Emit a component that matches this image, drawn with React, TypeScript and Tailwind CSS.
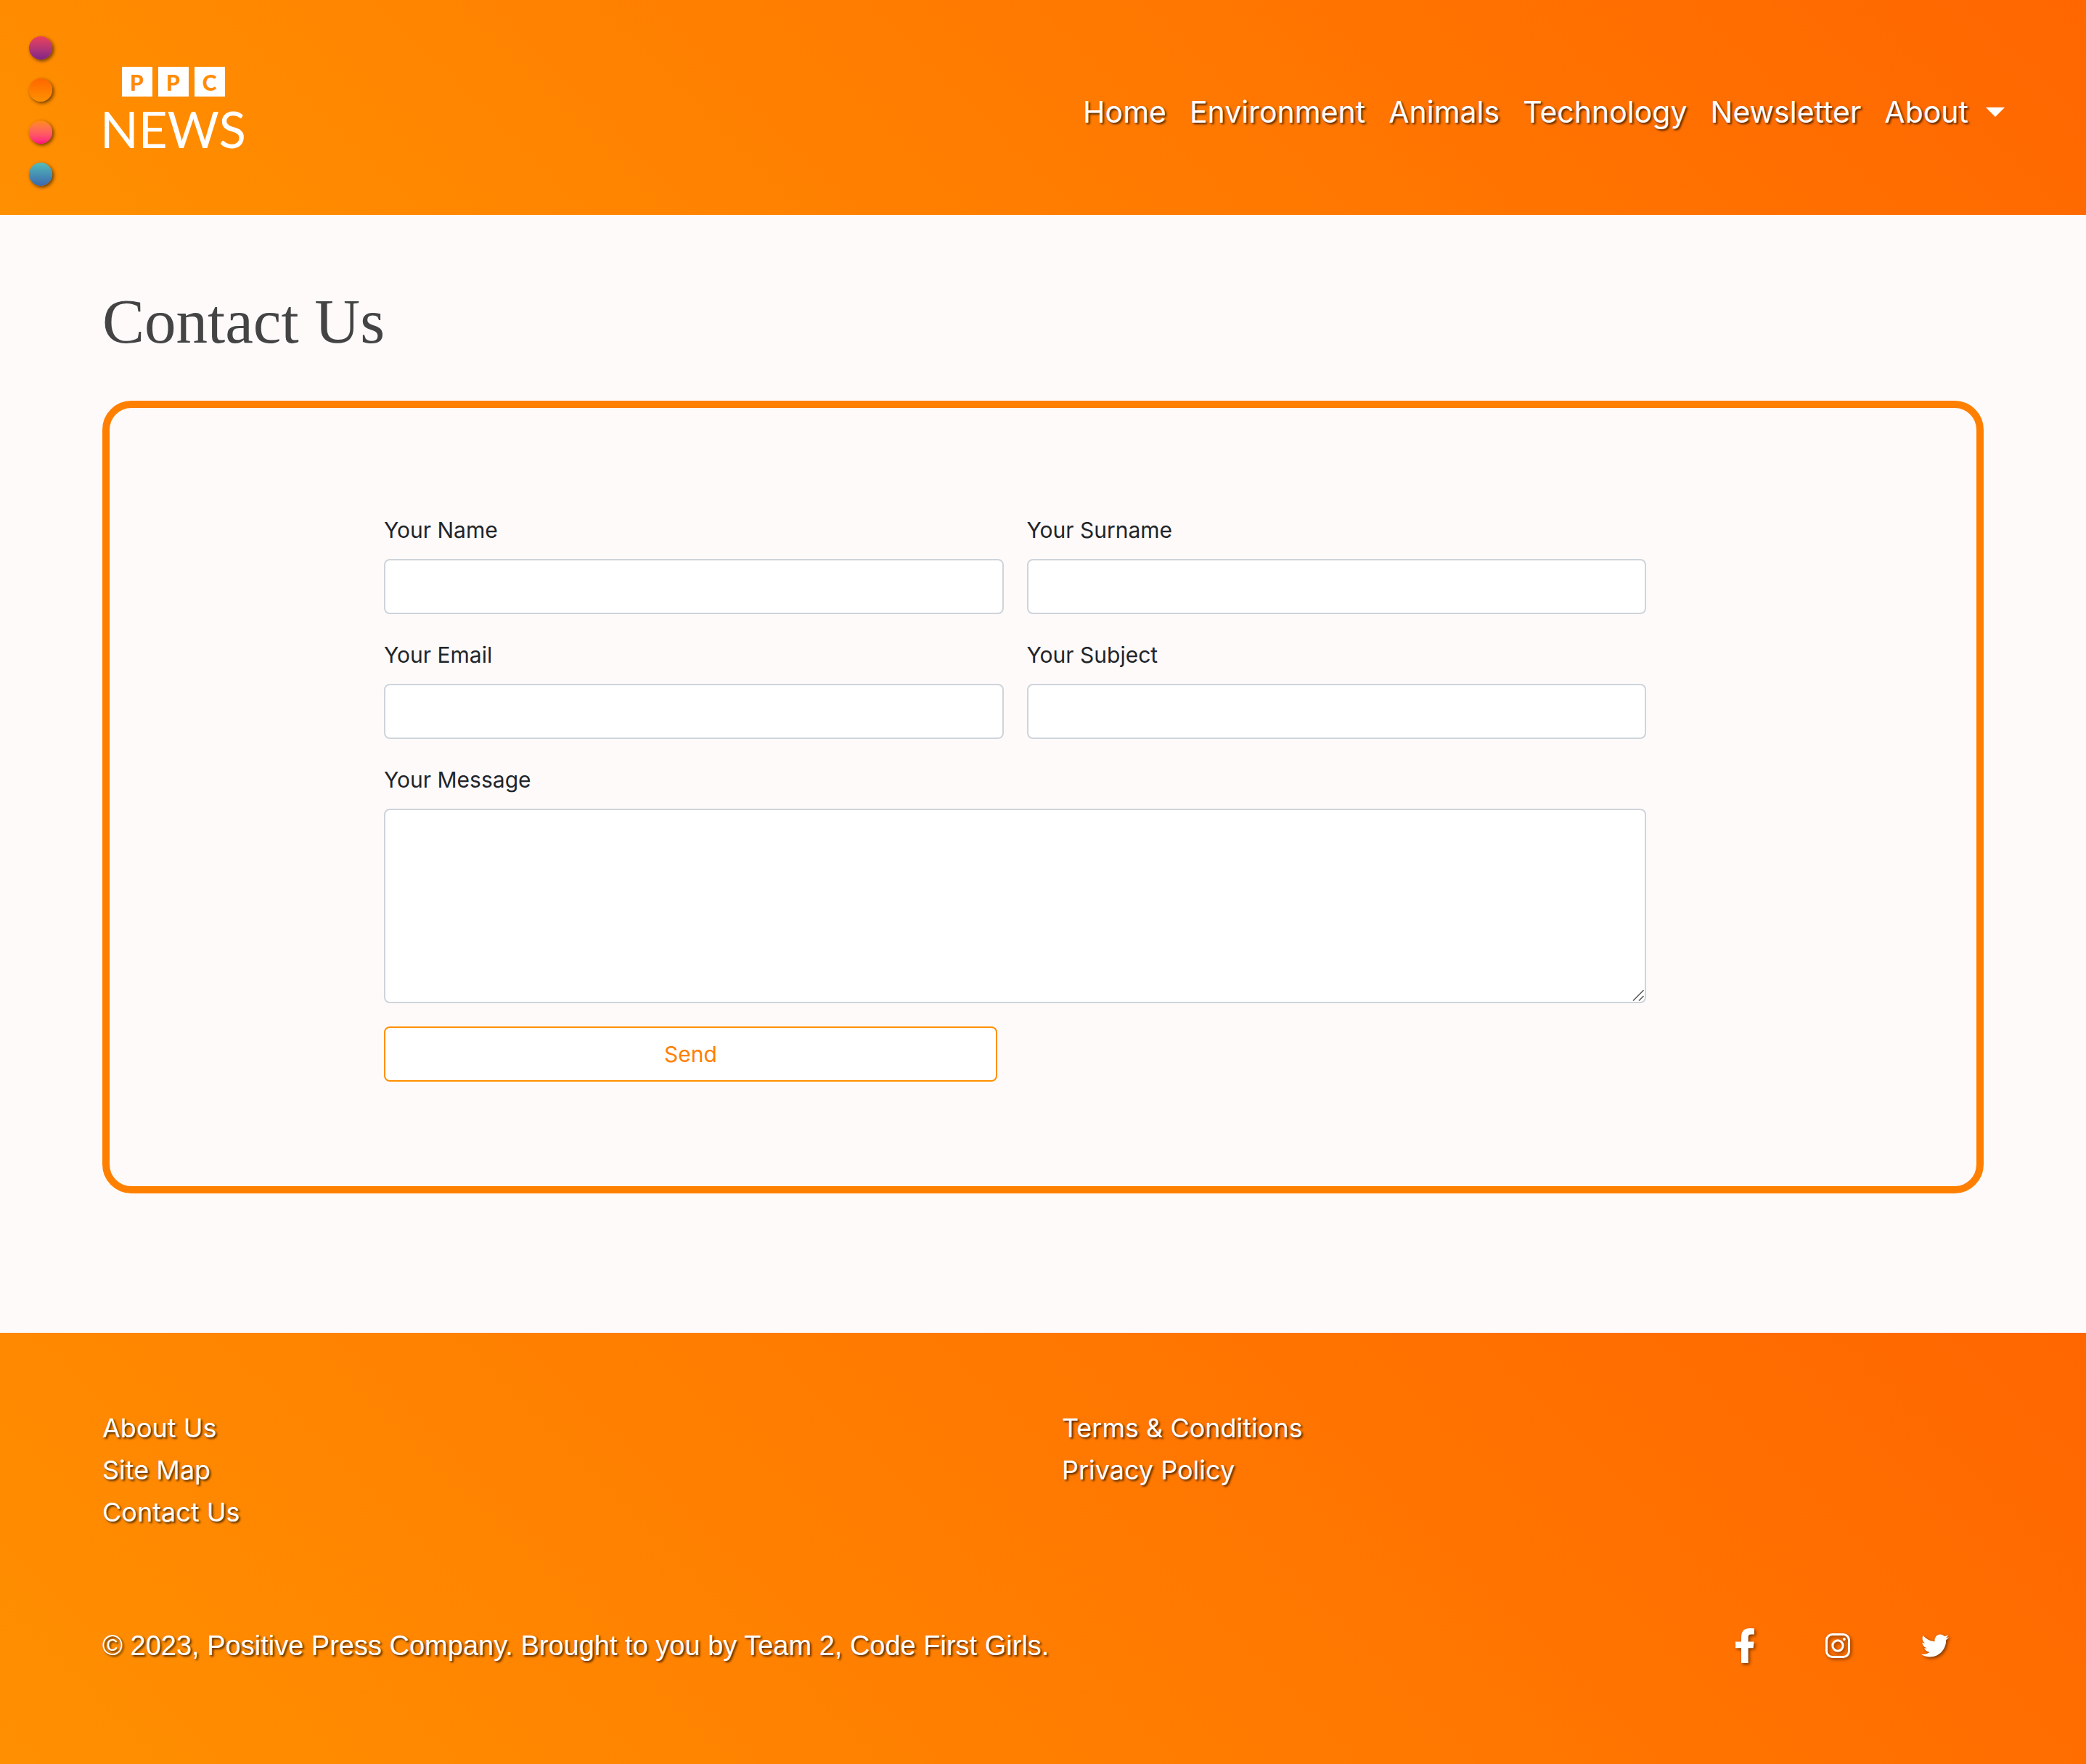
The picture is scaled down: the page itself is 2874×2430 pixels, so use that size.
import React from "react";
import { FaTwitter } from "react-icons/fa";

const SANS = "font-['Inter','Liberation_Sans',sans-serif]";

const themes = [
  { name: "Purple theme", style: "bg-linear-to-b from-[#ee4056] to-[#832187]" },
  { name: "Orange theme", style: "bg-linear-to-b from-[#ff6600] to-[#ff9000]" },
  { name: "Pink theme", style: "bg-linear-to-b from-[#ff8c00] to-[#ff0080]" },
  { name: "Blue theme", style: "bg-linear-to-b from-[#55bcb9] to-[#3c67ab]" },
];

const navLinks = ["Home", "Environment", "Animals", "Technology", "Newsletter"];

function Logo() {
  return (
    <a
      href="#"
      aria-label="PPC News"
      className="flex flex-col items-center font-['Lato','Liberation_Sans',sans-serif] text-white"
    >
      <span className="flex gap-2">
        {["P", "P", "C"].map((letter, i) => (
          <span
            key={i}
            className="flex h-[41px] w-[42px] items-center justify-center bg-white text-[30px] leading-none font-black text-[#ff8c00]"
          >
            {letter}
          </span>
        ))}
      </span>
      <span className="mt-2.5 text-[69px] leading-[70px]">NEWS</span>
    </a>
  );
}

function Header() {
  return (
    <header className="flex h-[296px] bg-[linear-gradient(45deg,#ff9000,#ff6600)]">
      <div className="flex flex-col gap-[26px] pt-[50px] pl-10">
        {themes.map((t) => (
          <button
            key={t.name}
            type="button"
            aria-label={t.name}
            className={`size-8 rounded-full shadow-[2px_2px_5px_rgba(0,0,0,0.6)] ${t.style}`}
          />
        ))}
      </div>
      <div className="flex flex-1 items-start justify-between pt-[92px] pr-[112px] pl-[66px]">
        <Logo />
        <nav
          className={`mt-8 flex items-center gap-8 text-[41px] leading-[60px] text-white ${SANS} [text-shadow:2px_2px_3px_rgba(0,0,0,0.7)]`}
        >
          {navLinks.map((l) => (
            <a key={l} href="#">
              {l}
            </a>
          ))}
          <button type="button" aria-haspopup="menu" className="flex items-center gap-6">
            <span className="[text-shadow:2px_2px_3px_rgba(0,0,0,0.7)]">About</span>
            <span className="border-x-[13px] border-t-[13px] border-x-transparent border-t-white" />
          </button>
        </nav>
      </div>
    </header>
  );
}

const control = "w-full rounded-lg border-2 border-[#ced4da] bg-white px-6";

function Field({ id, label, type = "text" }: { id: string; label: string; type?: string }) {
  return (
    <div className="flex flex-col gap-4">
      <label htmlFor={id}>{label}</label>
      <input id={id} type={type} className={`h-[76px] ${control}`} />
    </div>
  );
}

function ContactForm() {
  return (
    <form
      className={`rounded-[40px] border-[10px] border-[#ff8000] py-36 pr-[455px] pl-[378px] text-[30px] leading-[48px] text-[#212529] ${SANS}`}
    >
      <div className="grid grid-cols-2 gap-8">
        <Field id="name" label="Your Name" />
        <Field id="surname" label="Your Surname" />
        <Field id="email" label="Your Email" type="email" />
        <Field id="subject" label="Your Subject" />
        <div className="col-span-2 flex flex-col gap-4">
          <label htmlFor="message">Your Message</label>
          <div className="relative flex">
            <textarea id="message" className={`h-[268px] resize-none py-3 ${control}`} />
            <svg
              viewBox="0 0 16 16"
              className="pointer-events-none absolute right-[3px] bottom-[3px] size-4"
              fill="none"
              stroke="#555"
              strokeWidth="1.5"
              aria-hidden="true"
            >
              <path d="M1 15.5 15.5 1M9 15.5l6.500-6.500" />
            </svg>
          </div>
        </div>
      </div>
      <button
        type="submit"
        className="mt-8 block h-[76px] w-[845px] rounded-lg border-2 border-[#ff9000] bg-white text-[#ff8000]"
      >
        Send
      </button>
    </form>
  );
}

function FacebookIcon() {
  return (
    <svg viewBox="0 0 78 145" className="h-12 w-[26px]" fill="currentColor" aria-hidden="true">
      <path d="M78 1V26H64Q53 26 53 37V56H77L74 82H53V145H24V82H0V56H24V37Q24 0 60 0Q70 0 78 1Z" />
    </svg>
  );
}

function InstagramIcon() {
  return (
    <svg viewBox="0 0 102 102" className="size-[34px]" fill="none" stroke="currentColor" aria-hidden="true">
      <rect x="4.500" y="4.500" width="93" height="93" rx="24" strokeWidth="9" />
      <circle cx="51" cy="51" r="21.500" strokeWidth="9" />
      <circle cx="77.500" cy="24" r="6" fill="currentColor" stroke="none" />
    </svg>
  );
}

function Footer() {
  return (
    <footer
      className={`bg-[linear-gradient(45deg,#ff9000,#ff6600)] px-[141px] pt-[102px] pb-[134px] text-[36px] leading-[58px] text-white ${SANS} [text-shadow:2px_2px_3px_rgba(0,0,0,0.7)]`}
    >
      <div className="flex">
        <ul className="w-[51%]">
          {["About Us", "Site Map", "Contact Us"].map((l) => (
            <li key={l}>
              <a href="#">{l}</a>
            </li>
          ))}
        </ul>
        <ul>
          {["Terms & Conditions", "Privacy Policy"].map((l) => (
            <li key={l}>
              <a href="#">{l}</a>
            </li>
          ))}
        </ul>
      </div>
      <div className="mt-[126px] flex items-center justify-between pr-12">
        <p className="font-['Liberation_Sans',sans-serif] text-[38px]">
          © 2023, Positive Press Company. Brought to you by Team 2, Code First Girls.
        </p>
        <div className="flex items-center gap-[98px] [filter:drop-shadow(2px_2px_2px_rgba(0,0,0,0.5))]">
          <a href="#" aria-label="Facebook">
            <FacebookIcon />
          </a>
          <a href="#" aria-label="Instagram">
            <InstagramIcon />
          </a>
          <a href="#" aria-label="Twitter">
            <FaTwitter className="size-[38px]" />
          </a>
        </div>
      </div>
    </footer>
  );
}

export default function App() {
  return (
    <div className="bg-[#fffafa]">
      <Header />
      <main className="px-[141px] pt-[97px] pb-48">
        <h1 className="mb-[59px] font-['Liberation_Serif',serif] text-[87px] leading-[100px] text-[#444]">
          Contact Us
        </h1>
        <ContactForm />
      </main>
      <Footer />
    </div>
  );
}
